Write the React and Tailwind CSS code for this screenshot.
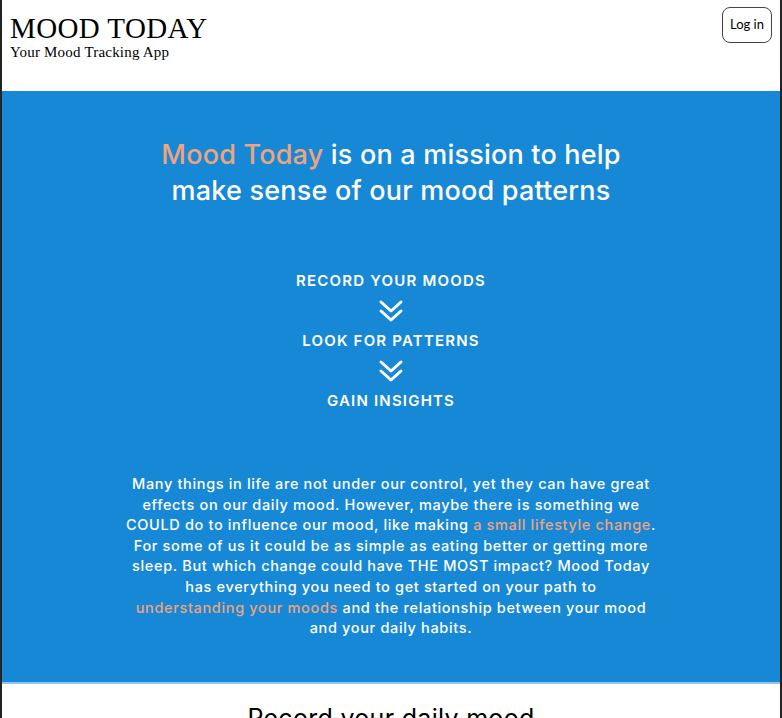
const steps = ['RECORD YOUR MOODS', 'LOOK FOR PATTERNS', 'GAIN INSIGHTS'];

function DoubleChevron() {
  return (
    <svg width="26" height="24" viewBox="0 0 26 24" fill="none" stroke="white" strokeWidth="3" strokeLinecap="round" strokeLinejoin="round" className="my-[7px]">
      <polyline points="3,3 13,12 23,3" />
      <polyline points="3,12 13,21 23,12" />
    </svg>
  );
}

export default function App() {
  return (
    <div className="min-h-screen bg-white border-x-2 border-[#222]">
      {/* HEADER */}
      <header className="h-[91px] flex justify-between items-start px-2">
        <div className="pt-[13px] font-['Liberation_Serif',serif] text-black">
          <h1 className="text-[29px] leading-[30px] tracking-[0.4px]">MOOD TODAY</h1>
          <p className="text-[15px] leading-[19px] tracking-[0.2px]">Your Mood Tracking App</p>
        </div>
        <button className="mt-[7px] h-[36px] px-[7px] rounded-[8px] border border-[#444] text-[13px] text-black font-['Lato',sans-serif]">
          Log in
        </button>
      </header>

      {/* HERO */}
      <section className="bg-[#1788d6] border-b-2 border-[#8ec5ef] text-white font-['Inter',sans-serif] pt-[46px] pb-[43px]">
        <h2 className="text-center text-[27px] leading-[36px] font-medium tracking-[0.2px]">
          <span className="text-[#eea47c]">Mood Today</span> is on a mission to help
          <br />
          make sense of our mood patterns
        </h2>

        <div className="mt-[61px] flex flex-col items-center">
          {steps.map((s, i) => (
            <div key={s} className="flex flex-col items-center">
              <span className="text-[15px] leading-[22px] font-semibold tracking-[1.2px]">{s}</span>
              {i < steps.length - 1 && <DoubleChevron />}
            </div>
          ))}
        </div>

        <p className="mt-[62px] text-center text-[14.5px] leading-[20.6px] font-medium tracking-[0.65px]">
          Many things in life are not under our control, yet they can have great
          <br />
          effects on our daily mood. However, maybe there is something we
          <br />
          COULD do to influence our mood, like making <span className="text-[#eea47c]">a small lifestyle change</span>.
          <br />
          For some of us it could be as simple as eating better or getting more
          <br />
          sleep. But which change could have THE MOST impact? Mood Today
          <br />
          has everything you need to get started on your path to
          <br />
          <span className="text-[#eea47c]">understanding your moods</span> and the relationship between your mood
          <br />
          and your daily habits.
        </p>
      </section>

      {/* NEXT SECTION */}
      <section className="pt-[18px] text-center font-['Inter',sans-serif]">
        <h3 className="text-[25px] leading-[32px] text-black tracking-[0.3px]">Record your daily mood</h3>
      </section>
    </div>
  );
}
